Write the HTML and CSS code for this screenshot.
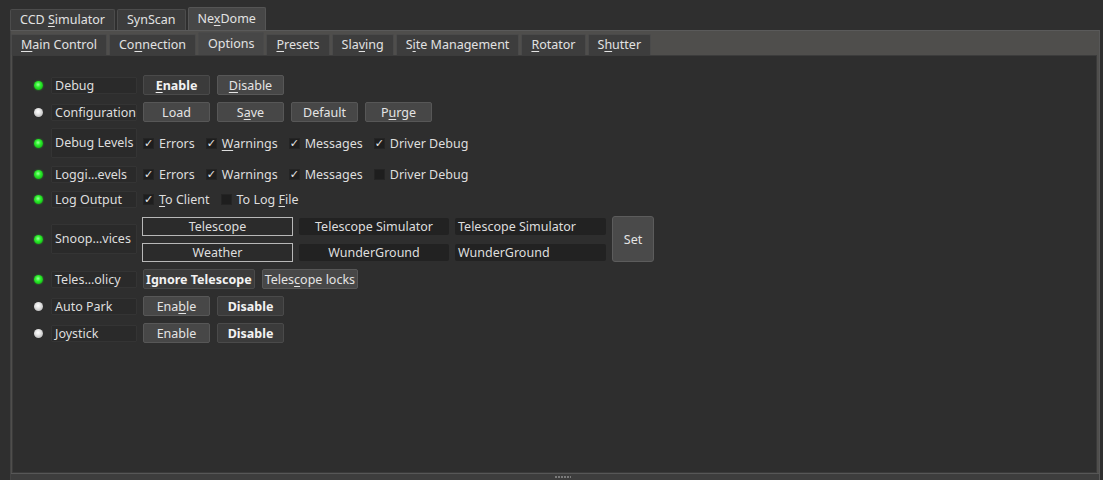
FILE: index.html
```html
<!DOCTYPE html>
<html>
<head>
<meta charset="utf-8">
<link rel="stylesheet" href="styles.css">
</head>
<body>
<div class="app">
  <div class="outer-tabs">
    <div class="tab">CCD <u>S</u>imulator</div>
    <div class="tab">SynScan</div>
    <div class="tab active">Ne<u>x</u>Dome</div>
  </div>
  <div class="outer-pane">
    <div class="inner-tabs">
      <div class="tab"><u>M</u>ain Control</div>
      <div class="tab">Co<u>n</u>nection</div>
      <div class="tab active">Options</div>
      <div class="tab"><u>P</u>resets</div>
      <div class="tab">Sla<u>v</u>ing</div>
      <div class="tab">S<u>i</u>te Management</div>
      <div class="tab"><u>R</u>otator</div>
      <div class="tab">S<u>h</u>utter</div>
    </div>
    <div class="inner-pane">
      <div class="rows">
        <div class="row">
          <span class="led on"></span>
          <div class="label">Debug</div>
          <div class="controls buttons">
            <div class="btn checked"><u>E</u>nable</div>
            <div class="btn"><u>D</u>isable</div>
          </div>
        </div>
        <div class="row">
          <span class="led off"></span>
          <div class="label">Configuration</div>
          <div class="controls buttons">
            <div class="btn">Load</div>
            <div class="btn">S<u>a</u>ve</div>
            <div class="btn">Default</div>
            <div class="btn">P<u>u</u>rge</div>
          </div>
        </div>
        <div class="row tall">
          <span class="led on"></span>
          <div class="label label-tall">Debug Levels</div>
          <div class="controls checks">
            <div class="check"><span class="box on">✓</span>Errors</div>
            <div class="check"><span class="box on">✓</span><span><u>W</u>arnings</span></div>
            <div class="check"><span class="box on">✓</span>Messages</div>
            <div class="check"><span class="box on">✓</span>Driver Debug</div>
          </div>
        </div>
        <div class="row short">
          <span class="led on"></span>
          <div class="label">Loggi…evels</div>
          <div class="controls checks">
            <div class="check"><span class="box on">✓</span>Errors</div>
            <div class="check"><span class="box on">✓</span>Warnings</div>
            <div class="check"><span class="box on">✓</span>Messages</div>
            <div class="check"><span class="box"></span>Driver Debug</div>
          </div>
        </div>
        <div class="row short">
          <span class="led on"></span>
          <div class="label">Log Output</div>
          <div class="controls checks">
            <div class="check"><span class="box on">✓</span><span><u>T</u>o Client</span></div>
            <div class="check"><span class="box"></span><span>To Log <u>F</u>ile</span></div>
          </div>
        </div>
        <div class="row snoop-row">
          <span class="led on"></span>
          <div class="label label-tall">Snoop…vices</div>
          <div class="controls snoop">
            <div class="field edit">Telescope</div>
            <div class="field ro center">Telescope Simulator</div>
            <div class="field ro">Telescope Simulator</div>
            <div class="btn set">Set</div>
            <div class="field edit">Weather</div>
            <div class="field ro center">WunderGround</div>
            <div class="field ro">WunderGround</div>
          </div>
        </div>
        <div class="row">
          <span class="led on"></span>
          <div class="label">Teles…olicy</div>
          <div class="controls buttons">
            <div class="btn checked auto">I<u>g</u>nore Telescope</div>
            <div class="btn auto">Teles<u>c</u>ope locks</div>
          </div>
        </div>
        <div class="row">
          <span class="led off"></span>
          <div class="label">Auto Park</div>
          <div class="controls buttons">
            <div class="btn">Ena<u>b</u>le</div>
            <div class="btn checked">Disable</div>
          </div>
        </div>
        <div class="row">
          <span class="led off"></span>
          <div class="label">Joystick</div>
          <div class="controls buttons">
            <div class="btn">Enable</div>
            <div class="btn checked">Disable</div>
          </div>
        </div>
      </div>
    </div>
    <div class="splitter"><span class="grip"></span></div>
  </div>
</div>
</body>
</html>
```
FILE: styles.css
```css
html, body {
  margin: 0;
  padding: 0;
  background: #2f2f2f;
  width: 1103px;
  height: 480px;
  overflow: hidden;
}
body {
  font-family: "Noto Sans", "Open Sans", sans-serif;
  font-size: 12.5px;
  color: #dedede;
}
u { text-decoration: underline; text-underline-offset: 2px; }

.outer-tabs {
  display: flex;
  align-items: flex-end;
  gap: 2px;
  height: 23px;
  padding: 7px 0 0 10px;
}
.tab {
  height: 21px;
  line-height: 20px;
  padding: 0 9px;
  background: #3c3c3c;
  border: 1px solid #4c4c4c;
  border-bottom: none;
  border-radius: 2px 2px 0 0;
  box-sizing: border-box;
  white-space: nowrap;
  color: #e2e2e2;
}
.tab.active {
  height: 23px;
  line-height: 22px;
  background: #474747;
  border-color: #555;
}

.outer-pane {
  margin-left: 10px;
  width: 1090px;
  height: 450px;
  box-sizing: border-box;
  background: #4f4e4c;
  border-top: 1px solid #5a5a5a;
  border-left: 1px solid #444;
  border-right: 1px solid #575757;
  display: flex;
  flex-direction: column;
}
.inner-tabs {
  display: flex;
  align-items: flex-end;
  gap: 2px;
  height: 24px;
  padding-left: 0;
}
.inner-tabs .tab {
  height: 21px;
  background: #3d3d3d;
  border-color: #4a4a4a;
}
.inner-tabs .tab.active {
  height: 23px;
  background: #474747;
}

.inner-pane {
  flex: 1;
  margin: 0 2px 0 1px;
  background: #2e2e2e;
  border: 1px solid #3a3a3a;
  border-top-color: #3c3c3c;
}
.rows {
  display: flex;
  flex-direction: column;
  gap: 7px;
  padding: 19px 0 0 21px;
}
.row {
  display: flex;
  align-items: center;
  min-height: 20px;
}
.row.tall { min-height: 29px; margin-top: -1px; }
.row.short { min-height: 18px; }
.row.snoop-row { margin-top: 1px; }

.led {
  width: 9px;
  height: 9px;
  border-radius: 50%;
  margin-right: 8px;
  flex: none;
}
.led.on {
  background: radial-gradient(circle at 45% 40%, #9dff9d 0%, #2ef02e 35%, #11b811 80%, #0d7d0d 100%);
  box-shadow: 0 0 2px rgba(40, 230, 40, 0.6);
}
.led.off {
  background: radial-gradient(circle at 45% 40%, #ffffff 0%, #e6e6e6 35%, #b8b8b8 80%, #8a8a8a 100%);
}

.label {
  width: 86px;
  height: 17px;
  box-sizing: border-box;
  padding-left: 3px;
  line-height: 15px;
  background: #2a2a2a;
  border: 1px solid #343434;
  border-radius: 1px;
  margin-right: 6px;
  white-space: nowrap;
  overflow: hidden;
  flex: none;
}
.label-tall {
  height: 30px;
  line-height: 28px;
}

.controls { display: flex; align-items: center; }
.buttons { gap: 7px; }
.btn {
  width: 67px;
  height: 20px;
  box-sizing: border-box;
  display: flex;
  align-items: center;
  justify-content: center;
  background: #474747;
  border: 1px solid #575757;
  border-radius: 2px;
  white-space: nowrap;
  color: #e4e4e4;
}
.btn.checked {
  background: #3b3b3b;
  border-color: #4a4a4a;
  font-weight: bold;
  color: #f2f2f2;
}
.btn.auto { width: auto; padding: 0 2px; }

.checks { gap: 11px; }
.check {
  display: flex;
  align-items: center;
  gap: 5px;
  white-space: nowrap;
}
.box {
  width: 11px;
  height: 11px;
  box-sizing: border-box;
  background: #1e1e1e;
  border: 1px solid #242424;
  font-family: "DejaVu Sans", sans-serif;
  font-size: 11px;
  line-height: 9px;
  text-align: center;
  color: #e8e8e8;
  overflow: visible;
}

.snoop {
  display: grid;
  grid-template-columns: 151px 150px 151px 42px;
  grid-template-rows: 20px 20px;
  column-gap: 6px;
  row-gap: 6px;
  margin-left: -1px;
}
.field {
  box-sizing: border-box;
  display: flex;
  align-items: center;
  white-space: nowrap;
  border-radius: 2px;
}
.field.edit {
  justify-content: center;
  border: 1px solid #b8b8b8;
  background: #2b2b2b;
  border-radius: 0;
  height: 19px;
  align-self: center;
}
.field.ro {
  background: #222222;
  padding-left: 3px;
}
.field.ro.center { justify-content: center; padding-left: 0; }
.btn.set {
  width: 42px;
  height: 46px;
  grid-column: 4;
  grid-row: 1 / span 2;
  background: #4a4a4a;
  border-color: #5c5c5c;
  border-radius: 3px;
}

.splitter {
  height: 6px;
  margin-top: 0;
  background: #3d3d3d;
  border-top: 1px solid #575757;
  display: flex;
  justify-content: center;
  align-items: center;
}
.grip {
  width: 16px;
  height: 2px;
  margin-left: 16px;
  background: repeating-linear-gradient(90deg, #7a7a7a 0 2px, transparent 2px 3px);
}
```
